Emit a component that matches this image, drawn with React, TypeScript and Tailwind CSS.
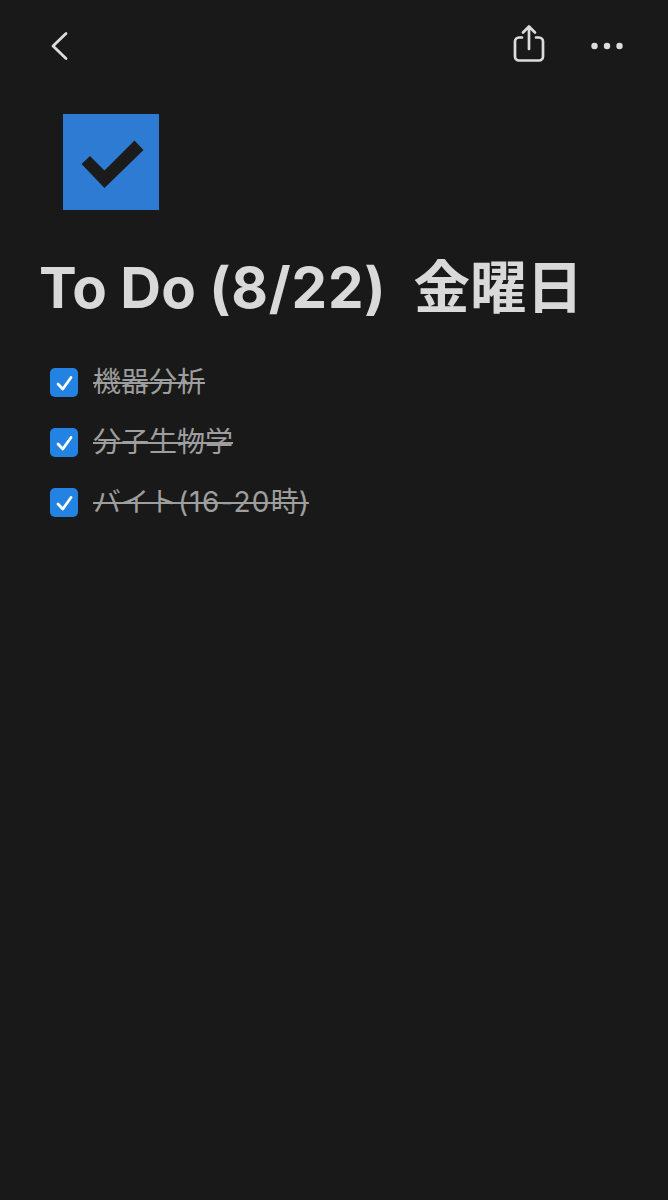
const FONT = "font-['Inter','Noto_Sans_CJK_JP',sans-serif]";

function Check() {
  return (
    <span className="flex h-[29px] w-[28px] shrink-0 items-center justify-center rounded-[5px] bg-[#2383e2]">
      <svg width="28" height="29" viewBox="0 0 28 29" fill="none">
        <path d="M8 16L12.800 21L21 9.500" stroke="#fff" strokeWidth="2.800" strokeLinecap="round" strokeLinejoin="round" />
      </svg>
    </span>
  );
}

const rowText = "whitespace-pre text-[28px] leading-[29px] text-[#9e9e9e] line-through";

export default function App() {
  return (
    <div className={`h-[1200px] w-[668px] overflow-hidden bg-[#191919] ${FONT}`}>
      <header className="flex h-[92px] items-start justify-between pl-[50px] pr-[44px] pt-[24px]">
        <svg width="20" height="44" viewBox="0 0 20 44" fill="none" stroke="#dcdcdc" strokeWidth="2.8" strokeLinecap="round" strokeLinejoin="round">
          <path d="M16 9.500L3 22L16 34.500" />
        </svg>
        <div className="flex items-start gap-[45px]">
          <svg width="32" height="40" viewBox="0 0 32 40" fill="none" stroke="#dcdcdc" strokeWidth="2.700" strokeLinecap="round" strokeLinejoin="round">
            <path d="M9 13.500H6A4 4 0 0 0 2 17.500V32.500A4 4 0 0 0 6 36.500H26A4 4 0 0 0 30 32.500V17.500A4 4 0 0 0 26 13.500H23" />
            <path d="M16 25V3M10 8.500L16 2.500L22 8.500" />
          </svg>
          <svg width="34" height="44" viewBox="0 0 34 44" fill="#dcdcdc">
            <circle cx="4.500" cy="22" r="3.200" />
            <circle cx="17" cy="22" r="3.200" />
            <circle cx="29.500" cy="22" r="3.200" />
          </svg>
        </div>
      </header>
      <main className="mt-[22px] flex flex-col">
        <div className="ml-[62.500px] h-[96px] w-[96px] bg-[#2e7bd3]">
          <svg width="96" height="96" viewBox="0 0 96 96">
            <path d="M18.500 50L27 42L41.500 56.500L71.500 26.500L80.500 36L41.500 74Z" fill="#1b1b1b" />
          </svg>
        </div>
        <h1 className="ml-[39px] mt-[40px] flex whitespace-pre text-[56.500px] font-bold leading-[76px] text-[#d9d9d9]">
          <span>To Do </span>
          <span className="tracking-[0.8px]">(8/22)</span>
          <span className="ml-[27px]">金曜日</span>
        </h1>
        <ul className="ml-[50px] mt-[42px] flex flex-col gap-[31px]">
          <li className="flex h-[29px] items-center gap-[15px]">
            <Check />
            <span className={rowText}>機器分析</span>
          </li>
          <li className="flex h-[29px] items-center gap-[15px]">
            <Check />
            <span className={rowText}>分子生物学</span>
          </li>
          <li className="flex h-[29px] items-center gap-[15px]">
            <Check />
            <span className={`${rowText} [word-spacing:-7px]`}>
              バイト <span className="tracking-[1.200px]">(16-20</span>時)
            </span>
          </li>
        </ul>
      </main>
    </div>
  );
}
